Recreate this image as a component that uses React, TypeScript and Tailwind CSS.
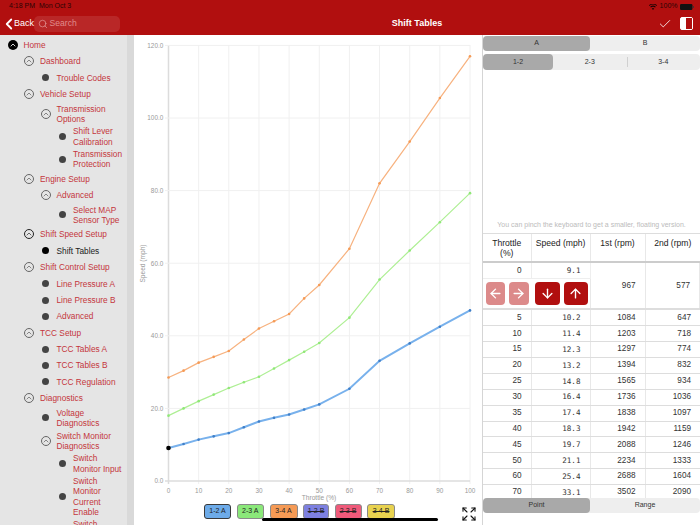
import React from 'react';
import { ArrowDown, ArrowLeft, ArrowRight, ArrowUp, Check, ChevronLeft, ChevronUp, Expand, Search } from 'lucide-react';

type NavItem = {
  label: string;
  kind?: 'root' | 'open' | 'active' | 'leaf' | 'current';
  children?: NavItem[];
};

const nav: NavItem[] = [
  {
    label: 'Home',
    kind: 'root',
    children: [
      { label: 'Dashboard', kind: 'open', children: [{ label: 'Trouble Codes' }] },
      {
        label: 'Vehicle Setup',
        kind: 'open',
        children: [
          {
            label: 'Transmission Options',
            kind: 'open',
            children: [{ label: 'Shift Lever Calibration' }, { label: 'Transmission Protection' }],
          },
        ],
      },
      {
        label: 'Engine Setup',
        kind: 'open',
        children: [{ label: 'Advanced', kind: 'open', children: [{ label: 'Select MAP Sensor Type' }] }],
      },
      { label: 'Shift Speed Setup', kind: 'active', children: [{ label: 'Shift Tables', kind: 'current' }] },
      {
        label: 'Shift Control Setup',
        kind: 'open',
        children: [{ label: 'Line Pressure A' }, { label: 'Line Pressure B' }, { label: 'Advanced' }],
      },
      {
        label: 'TCC Setup',
        kind: 'open',
        children: [{ label: 'TCC Tables A' }, { label: 'TCC Tables B' }, { label: 'TCC Regulation' }],
      },
      {
        label: 'Diagnostics',
        kind: 'open',
        children: [
          { label: 'Voltage Diagnostics' },
          {
            label: 'Switch Monitor Diagnostics',
            kind: 'open',
            children: [
              { label: 'Switch Monitor Input' },
              { label: 'Switch Monitor Current Enable' },
              { label: 'Switch Monitor Output' },
            ],
          },
        ],
      },
    ],
  },
];

function NavIcon({ kind = 'leaf' }: { kind?: NavItem['kind'] }) {
  if (kind === 'root') {
    return (
      <span className="w-[10px] h-[10px] rounded-full bg-black flex items-center justify-center shrink-0">
        <ChevronUp size={8} strokeWidth={2.5} className="text-white" />
      </span>
    );
  }
  if (kind === 'open') {
    return (
      <span className="w-[10px] h-[10px] rounded-full border border-[#666] flex items-center justify-center shrink-0">
        <ChevronUp size={8} strokeWidth={2} className="text-[#555]" />
      </span>
    );
  }
  if (kind === 'active') {
    return (
      <span className="w-[10px] h-[10px] rounded-full border border-[#222] flex items-center justify-center shrink-0">
        <ChevronUp size={8} strokeWidth={2} className="text-[#222]" />
      </span>
    );
  }
  if (kind === 'current') {
    return (
      <span className="w-[10px] h-[10px] flex items-center justify-center shrink-0">
        <span className="w-[7px] h-[7px] rounded-full bg-black" />
      </span>
    );
  }
  return (
    <span className="w-[10px] h-[10px] flex items-center justify-center shrink-0">
      <span className="w-[7px] h-[7px] rounded-full bg-[#444]" />
    </span>
  );
}

function NavTree({ items }: { items: NavItem[] }) {
  return (
    <>
      {items.map((item) => (
        <div key={item.label}>
          <div className="flex items-center gap-[6px] min-h-[16.4px] py-[1.2px] pr-[4px]">
            <NavIcon kind={item.kind} />
            <span className={item.kind === 'current' ? 'text-[#222]' : 'text-[#c4363c]'}>{item.label}</span>
          </div>
          {item.children && (
            <div className="pl-[16.5px]">
              <NavTree items={item.children} />
            </div>
          )}
        </div>
      ))}
    </>
  );
}

const xOf = (t: number) => 168.5 + t * 3.015;
const yOf = (v: number) => 481 - v * 3.63;

const throttle = [0, 5, 10, 15, 20, 25, 30, 35, 40, 45, 50, 60, 70, 80, 90, 100];
const blue = [9.1, 10.2, 11.4, 12.3, 13.2, 14.8, 16.4, 17.4, 18.3, 19.7, 21.1, 25.4, 33.1, 37.9, 42.5, 47];
const green = [18, 20, 22, 23.8, 25.6, 27.2, 28.7, 31, 33.3, 35.6, 38, 45, 55.5, 63.5, 71.3, 79.3];
const orange = [28.5, 30.4, 32.6, 34.2, 35.8, 39, 42, 44, 46, 50.3, 54, 64, 82, 93.5, 105.5, 117];

function Series({ values, line, dot, width }: { values: number[]; line: string; dot: string; width: number }) {
  const pts = values.map((v, i) => `${xOf(throttle[i])},${yOf(v)}`).join(' ');
  return (
    <g>
      <polyline points={pts} fill="none" stroke={line} strokeWidth={width} />
      {values.map((v, i) => (
        <circle key={i} cx={xOf(throttle[i])} cy={yOf(v)} r={1.3} fill={dot} />
      ))}
    </g>
  );
}

function Chart() {
  const xTicks = [0, 10, 20, 30, 40, 50, 60, 70, 80, 90, 100];
  const yTicks = [0, 20, 40, 60, 80, 100, 120];
  return (
    <svg viewBox="134 35 348 468" className="w-[348px] h-[468px] block shrink-0" fontFamily="'Liberation Sans', sans-serif">
      {xTicks.map((t) => (
        <g key={t}>
          <line x1={xOf(t)} x2={xOf(t)} y1={45} y2={484} stroke={t === 0 ? '#dcdcdc' : '#f0f0f0'} strokeWidth={t === 0 ? 1.5 : 1} />
          <text x={xOf(t)} y={493} textAnchor="middle" fontSize={6.4} fill="#999">
            {t}
          </text>
        </g>
      ))}
      {yTicks.map((v) => (
        <g key={v}>
          <line x1={165} x2={470} y1={yOf(v)} y2={yOf(v)} stroke={v === 0 ? '#dcdcdc' : '#f0f0f0'} strokeWidth={v === 0 ? 1.5 : 1} />
          <text x={163.3} y={yOf(v) + 2.3} textAnchor="end" fontSize={6.4} fill="#999">
            {v.toFixed(1)}
          </text>
        </g>
      ))}
      <text x={319} y={499.5} textAnchor="middle" fontSize={6.6} fill="#999">
        Throttle (%)
      </text>
      <text transform="translate(145 263.5) rotate(-90)" textAnchor="middle" fontSize={6.6} fill="#999">
        Speed (mph)
      </text>
      <Series values={orange} line="#f7b27f" dot="#f59a55" width={1.2} />
      <Series values={green} line="#aeef94" dot="#8fe777" width={1.2} />
      <Series values={blue} line="#78b1ec" dot="#3f7fc8" width={2} />
      <circle cx={xOf(0)} cy={yOf(9.1)} r={2.3} fill="#000" />
    </svg>
  );
}

const legend = [
  { label: '1-2 A', cls: 'w-[27px] bg-[#6dabe9] border-[#3a3a3a]' },
  { label: '2-3 A', cls: 'w-[27.5px] bg-[#8be87a] border-[#8a8a8a]' },
  { label: '3-4 A', cls: 'w-[28px] bg-[#f59a55] border-[#8a8a8a]' },
  { label: '1-2 B', cls: 'w-[26px] bg-[#7d80e0] border-[#8a8a8a] line-through' },
  { label: '2-3 B', cls: 'w-[27px] bg-[#ef5a7a] border-[#8a8a8a] line-through' },
  { label: '3-4 B', cls: 'w-[28px] bg-[#e8d24f] border-[#8a8a8a] line-through' },
];

const rows = [
  [5, '10.2', 1084, 647],
  [10, '11.4', 1203, 718],
  [15, '12.3', 1297, 774],
  [20, '13.2', 1394, 832],
  [25, '14.8', 1565, 934],
  [30, '16.4', 1736, 1036],
  [35, '17.4', 1838, 1097],
  [40, '18.3', 1942, 1159],
  [45, '19.7', 2088, 1246],
  [50, '21.1', 2234, 1333],
  [60, '25.4', 2688, 1604],
  [70, '33.1', 3502, 2090],
];

const cols = 'grid grid-cols-[48.5px_59px_55px_54.5px]';
const cell = 'flex items-center justify-end pr-[9px] border-r border-[#e8e8e8] last:border-r-0';
const speedCell = "font-['DejaVu_Sans_Mono',monospace] text-[7.6px]";

function Segment({ items, widths }: { items: string[]; widths: string[] }) {
  return (
    <div className="flex h-[15.6px] shrink-0 rounded-[4px] bg-[#eeeeee] text-[7px] text-[#333]">
      {items.map((it, i) => (
        <div
          key={it}
          className={`flex items-center justify-center rounded-[4px] ${widths[i]} ${i === 0 ? 'bg-[#a9a9a9]' : ''}`}
        >
          {it}
        </div>
      ))}
    </div>
  );
}

function ShiftTable() {
  return (
    <div className="h-[265px] shrink-0 overflow-hidden border-t border-[#dddddd] text-[8.2px] text-[#333]">
      <div className={`${cols} h-[29.5px] border-b-2 border-[#cccccc] text-[#222] text-[8.6px] leading-[10px]`}>
        <div className="flex items-center justify-center text-center border-r border-[#e8e8e8]">
          Throttle
          <br />
          (%)
        </div>
        <div className="flex items-center justify-center border-r border-[#e8e8e8] pb-[9px]">Speed (mph)</div>
        <div className="flex items-center justify-center border-r border-[#e8e8e8] pb-[9px]">1st (rpm)</div>
        <div className="flex items-center justify-center pb-[9px]">2nd (rpm)</div>
      </div>
      <div className={`${cols} grid-rows-[16px_29px] border-b-2 border-[#dddddd]`}>
        <div className={`${cell} border-b border-[#eeeeee]`}>0</div>
        <div className={`${cell} ${speedCell} border-b border-[#eeeeee]`}>9.1</div>
        <div className={`${cell} row-span-2`}>967</div>
        <div className={`${cell} row-span-2`}>577</div>
        <div className="col-span-2 flex items-center gap-[4px] pl-[2.5px] border-r border-[#e8e8e8]">
          <button className="w-[19.5px] h-[23px] rounded-[4px] bg-[#dc8a8a] flex items-center justify-center">
            <ArrowLeft size={15} strokeWidth={2.2} className="text-white" />
          </button>
          <button className="w-[19.5px] h-[23px] rounded-[4px] bg-[#dc8a8a] flex items-center justify-center">
            <ArrowRight size={15} strokeWidth={2.2} className="text-white" />
          </button>
          <button className="w-[24.5px] h-[23px] ml-[2.5px] rounded-[4px] bg-[#b10f0f] flex items-center justify-center">
            <ArrowDown size={15} strokeWidth={2.2} className="text-white" />
          </button>
          <button className="w-[24.5px] h-[23px] rounded-[4px] bg-[#b10f0f] flex items-center justify-center">
            <ArrowUp size={15} strokeWidth={2.2} className="text-white" />
          </button>
        </div>
      </div>
      {rows.map((r) => (
        <div key={r[0]} className={`${cols} h-[15.88px] border-b border-[#dddddd]`}>
          <div className={cell}>{r[0]}</div>
          <div className={`${cell} ${speedCell}`}>{r[1]}</div>
          <div className={cell}>{r[2]}</div>
          <div className={cell}>{r[3]}</div>
        </div>
      ))}
    </div>
  );
}

export default function App() {
  return (
    <div className="w-[700px] h-[525px] relative overflow-hidden bg-white flex flex-col font-['Liberation_Sans',Arial,sans-serif]">
      <header className="h-[35px] bg-[#b10f0f] shrink-0">
        <div className="h-[12px] pt-[1px] flex items-center justify-between pl-[9px] pr-[6px] text-[7px] text-[#2a0505]">
          <span>4:18 PM&nbsp;&nbsp;Mon Oct 3</span>
          <div className="flex items-center gap-[2.5px]">
            <svg width="8" height="6" viewBox="0 0 16 12" fill="#1a0404">
              <path d="M8 12 5.6 9.2a3.4 3.4 0 0 1 4.8 0Z" />
              <path d="M3.8 7.2a6.2 6.2 0 0 1 8.4 0l1.4-1.6a8.4 8.4 0 0 0-11.2 0Z" />
              <path d="M.8 3.8a10.6 10.6 0 0 1 14.4 0L16 2.4A12.6 12.6 0 0 0 0 2.4Z" />
            </svg>
            <span>100%</span>
            <svg width="14" height="6" viewBox="0 0 14 6">
              <rect x="0" y="0" width="12.4" height="6" rx="1.2" fill="#111" />
              <rect x="12.8" y="2" width="1" height="2" fill="#333" />
            </svg>
          </div>
        </div>
        <div className="h-[23px] grid grid-cols-[134px_50px_1fr_50px] items-center">
          <div className="flex items-center">
            <ChevronLeft size={18} strokeWidth={2.4} className="text-white -mr-[4px]" />
            <span className="text-[9px] text-white w-[20px]">Back</span>
            <div className="w-[86px] h-[16px] rounded-[5px] bg-white/10 flex items-center pl-[3.5px] gap-[2px]">
              <Search size={10} strokeWidth={1.6} className="text-[#e6a0a0]" />
              <span className="text-[8.6px] text-[#e08c8c]">Search</span>
            </div>
          </div>
          <div />
          <div className="text-center text-[9px] font-bold text-white">Shift Tables</div>
          <div className="flex items-center justify-end gap-[8px] pr-[7px]">
            <Check size={14} strokeWidth={1.4} className="text-white" />
            <span className="w-[13px] h-[13px] rounded-[2px] border-[1.5px] border-white bg-white flex justify-end">
              <span className="w-[6.5px] h-full bg-[#b10f0f]" />
            </span>
          </div>
        </div>
      </header>

      <main className="flex-1 min-h-0 flex">
        <aside className="w-[127px] shrink-0 bg-[#e5e5e5] overflow-hidden pl-[7.5px] pt-[1.8px] text-[8.3px] leading-[10.2px]">
          <NavTree items={nav} />
        </aside>
        <div className="w-[7px] shrink-0 bg-[#d9d9d9]" />
        <section className="w-[348px] shrink-0 flex flex-col">
          <Chart />
          <div className="flex items-start pl-[70px] pt-[1px] gap-[5.5px] h-[22px] self-stretch">
            {legend.map((l) => (
              <button
                key={l.label}
                className={`h-[15px] rounded-[3px] border-[1.5px] text-[7px] text-[#222] flex items-center justify-center ${l.cls}`}
              >
                {l.label}
              </button>
            ))}
            <Expand size={16} strokeWidth={1.6} className="ml-[60.5px] mt-[1.5px] text-[#111]" />
          </div>
        </section>
        <section className="flex-1 min-w-0 border-l border-[#d5d5d5] flex flex-col pt-[0.7px]">
          <Segment items={['A', 'B']} widths={['w-[107px]', 'flex-1']} />
          <div className="mt-[3px] relative">
            <Segment items={['1-2', '2-3', '3-4']} widths={['w-[70px]', 'w-[73.5px]', 'flex-1']} />
            <span className="absolute left-[143.5px] top-[3px] h-[9.5px] w-px bg-[#d0d0d0]" />
          </div>
          <div className="h-[163px] shrink-0 flex items-end justify-center pb-[2.5px] text-[7px] text-[#bbbbbb]">
            You can pinch the keyboard to get a smaller, floating version.
          </div>
          <ShiftTable />
          <Segment items={['Point', 'Range']} widths={['w-[107px]', 'flex-1']} />
        </section>
      </main>

      <div className="absolute left-[262px] top-[518px] w-[176px] h-[3px] rounded-full bg-black" />
    </div>
  );
}
